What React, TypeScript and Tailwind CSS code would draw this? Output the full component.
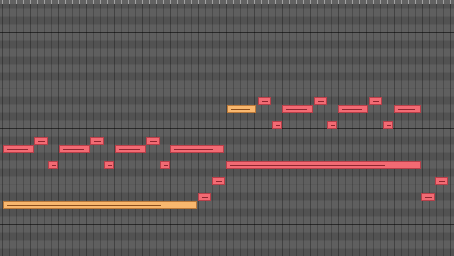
import React from 'react';

type Note = { x: number; x2: number; row: number; hot?: boolean };

// row = top y of the key lane (lanes are 8px, first pixel is the separator)
const notes: Note[] = [
  { x: 3, x2: 34, row: 144 },
  { x: 34, x2: 48, row: 136 },
  { x: 48, x2: 58, row: 160 },
  { x: 59, x2: 90, row: 144 },
  { x: 90, x2: 104, row: 136 },
  { x: 104, x2: 114, row: 160 },
  { x: 115, x2: 146, row: 144 },
  { x: 146, x2: 160, row: 136 },
  { x: 160, x2: 170, row: 160 },
  { x: 170, x2: 224, row: 144 },
  { x: 3, x2: 197, row: 200, hot: true },
  { x: 198, x2: 211, row: 192 },
  { x: 212, x2: 225, row: 176 },
  { x: 227, x2: 256, row: 104, hot: true },
  { x: 258, x2: 271, row: 96 },
  { x: 272, x2: 282, row: 120 },
  { x: 282, x2: 313, row: 104 },
  { x: 314, x2: 327, row: 96 },
  { x: 327, x2: 337, row: 120 },
  { x: 338, x2: 368, row: 104 },
  { x: 369, x2: 382, row: 96 },
  { x: 383, x2: 393, row: 120 },
  { x: 394, x2: 421, row: 104 },
  { x: 226, x2: 421, row: 160 },
  { x: 421, x2: 435, row: 192 },
  { x: 435, x2: 448, row: 176 },
];

const blackKeys = [0, 2, 5, 7, 9, 12, 14, 17, 19, 21, 24, 26, 29, 31];
const octaveLines = [4, 16, 28];

function PianoNote({ n }: { n: Note }) {
  const w = n.x2 - n.x;
  const line = Math.max(4, Math.round((w - 6) * 0.82));
  return (
    <div
      className={
        n.hot
          ? 'absolute h-[8px] border border-[#b9783a] bg-[#f8b76e] flex items-center'
          : 'absolute h-[8px] border border-[#b63f49] bg-[#f26a73] flex items-center'
      }
      style={{ left: n.x, top: n.row + 1, width: w }}
    >
      <div
        className={n.hot ? 'h-px bg-[#8c4e1c] ml-[3px]' : 'h-px bg-[#8e2630] ml-[3px]'}
        style={{ width: line }}
      />
    </div>
  );
}

export default function App() {
  return (
    <div className="relative w-[454px] h-[256px] overflow-hidden bg-[#5c5c5c]">
      {/* key lanes */}
      <div className="flex flex-col">
        {Array.from({ length: 32 }).map((_, k) => (
          <div
            key={k}
            className={[
              'h-[8px] border-t',
              blackKeys.includes(k) ? 'bg-[#525252]' : 'bg-[#5f5f5f]',
              octaveLines.includes(k) ? 'border-[#2a2a2a]' : 'border-[#595959]',
            ].join(' ')}
          />
        ))}
      </div>

      {/* step / beat columns */}
      <div className="absolute inset-0 flex pl-[2px]">
        {Array.from({ length: 65 }).map((_, i) => (
          <div
            key={i}
            className={
              i % 4 === 0
                ? 'w-[7px] shrink-0 border-l border-black/30'
                : 'w-[7px] shrink-0 border-l border-black/20'
            }
          />
        ))}
      </div>

      {/* timeline ticks */}
      <div className="absolute top-0 left-0 right-0 h-[4px] bg-[#626262] flex pl-[2px]">
        {Array.from({ length: 65 }).map((_, i) => (
          <div key={i} className="w-[7px] shrink-0 border-l border-[#a0a0a0]" />
        ))}
      </div>

      {notes.map((n, i) => (
        <PianoNote key={i} n={n} />
      ))}
    </div>
  );
}
